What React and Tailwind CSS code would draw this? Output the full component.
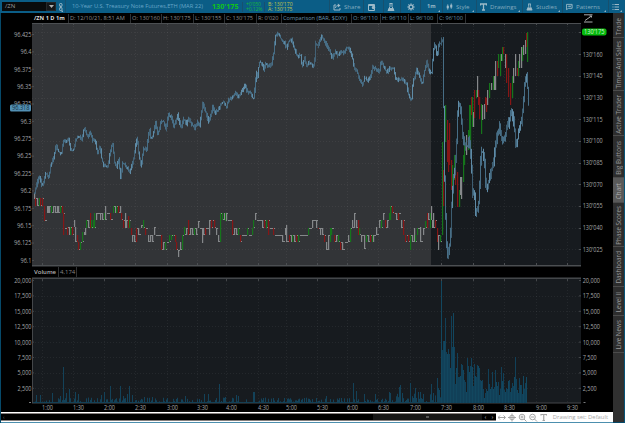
import React from 'react';

const GRID_X = [42, 73, 104, 135, 167, 197, 226, 258, 286, 317, 347, 378, 410, 441, 473, 504, 536, 567];
const GRID_Y = [32, 54, 76, 98, 119, 141, 163, 184, 206, 228, 249];
const LEFT = ['96.425', '96.4', '96.375', '96.35', '96.325', '96.3', '96.275', '96.25', '96.225', '96.2', '96.175', '96.15', '96.125', '96.1'];
const RIGHT = ["130'160", "130'145", "130'130", "130'115", "130'100", "130'085", "130'070", "130'055", "130'040", "130'025"];
const VOL = ['20,000', '17,500', '15,000', '12,500', '10,000', '7,500', '5,000', '2,500'];
const TIMES = ['1:00', '1:30', '2:00', '2:30', '3:00', '3:30', '4:00', '4:30', '5:00', '5:30', '6:00', '6:30', '7:00', '7:30', '8:00', '8:30', '9:00', '9:30'];

const DXY = `34,193 36,185 38.5,176 41.5,186 43.5,180 45.3,173 48.3,177 50,165 53.3,157 55.7,144 57.3,151 60.7,154 63.3,138 65.7,143 67.7,137 70.3,151 72.7,150 75,140 78.3,136 81,139 83.7,127 86.7,137 90,133 92,140 94.7,142 97,153 99.3,146 101.3,160 103.3,166 107.3,167 109.7,151 112,143 114,163 116,167 118,160 120,177 122.3,162 125,166 129.3,172 132,163 134.3,150 136.3,137 138,152 140.3,167 143.3,147 145.7,152 148.7,128 150,138 152.7,135 154.7,122 157.3,134 160.7,121 163.3,122 165.3,130 167.7,114 170.7,117 173.3,127 177,115 180.3,128 183.3,118 186,125 188,118 191,124 194,128 197,122 199,126 202,103 205,112 208,122 212,107 215,113 218,109 220,105 222.7,102 225.7,107 228,100 231.7,98 235.3,92 237.3,97 240,94 244.3,84 246.3,92 250,93 252.7,100 254.3,88 255.7,72 257.3,78 258.3,63 260.3,62 263.3,70 265.3,62 267.3,67 271,63 272.7,54 273.5,52 274.3,37 276.7,34 278.3,34 280.7,40 284,43 285.7,48 288.3,41 291,40 293,47 296.7,56 300,55 301.3,67 304,58 306,66 308,63 311.7,65 313.7,66 314.7,43 317.3,46 321,37 325,43 328.3,50 331.7,58 335,52 337.3,56 340.7,52 343.3,53 346.7,47 349.3,50 351.7,58 354.3,70 356.7,72 359.3,81 362,85 364.3,77 367.3,81 370,77 371.7,67 375,69 378.7,72 380.7,60 383.3,67 386,73 389.3,68 393.3,68 395,79 398.3,80 401.7,79 405.7,83 408,95 410.7,102 412.3,83 416,70 419.3,77 421.7,85 424,70 426,62 428.3,72 431,72 432.7,50 434.3,43 436.7,57 438.3,43 440,44 441.7,37 442.7,45 443.2,150 444.3,193 445.7,243 447,255 449.7,240 451,205 452.7,180 454.3,170 456,140 456.7,117 458.3,100 460.7,117 462.3,140 464.3,145 466.7,147 468.3,138 470.7,160 471.7,193 473.7,193 475,213 477,210 478.3,200 480.3,153 481.7,150 484.3,165 485.3,190 488.3,182 490.7,170 493.3,160 495,143 496.7,135 499,127 501,140 504,137 506.7,127 508.3,122 511,112 513.3,123 515,142 516.7,142 518.3,127 521,122 522.7,103 524.3,83 525.7,73 527,87 528,103 528.7,108`
  .split(' ').map((p) => p.split(',').map(Number));

// x, top, bottom, colour (w flat, r down, g up)
const CANDLES = `34,193,199,w 35,198,206,r 37,198,206,w 39,198,206,g 40,198,206,r 42,198,206,r 44,206,221,r 47,206,213,w 48,206,213,w 49,206,213,w 51,206,213,g 53,206,213,w 55,206,213,w 57,206,213,w 58,206,213,w 60,206,213,g 62,206,213,r 63,213,235,r 65,228,229,w 67,227,235,r 69,227,235,w 70,227,235,g 72,227,235,r 74,220,227,w 75,227,242,w 77,235,242,r 78,242,250,r 80,242,250,g 82,232,242,g 84,232,235,w 85,228,235,w 86,220,228,g 88,220,228,w 90,213,228,r 91,220,228,g 93,220,228,g 94,213,228,g 96,213,220,w 98,213,214,w 100,213,220,w 102,213,220,w 104,213,220,g 105,206,220,w 107,213,214,w 110,213,220,r 113,206,213,g 115,206,213,w 116,206,213,g 118,206,213,r 120,206,213,w 121,213,220,r 123,220,228,r 125,213,228,w 126,220,228,w 128,216,228,r 129,220,228,g 131,228,235,r 132,235,242,w 134,235,242,w 136,228,242,r 138,228,235,w 141,225,228,w 143,220,228,g 145,228,235,r 148,235,242,w 150,235,242,w 152,235,242,w 154,227,235,w 156,235,236,w 159,235,236,w 161,235,250,r 163,242,250,w 165,242,250,g 167,242,243,w 169,235,242,g 171,235,240,g 173,235,236,g 175,235,242,r 176,242,250,r 178,250,257,w 180,242,250,w 182,235,250,g 184,227,235,g 186,228,235,w 188,220,235,r 190,228,235,w 192,228,235,w 194,228,235,g 196,228,235,w 198,221,228,w 200,228,229,w 202,228,243,w 203,228,235,w 205,228,235,r 207,228,229,w 209,220,235,w 211,220,228,r 213,220,221,w 214,220,228,r 216,228,235,w 218,235,242,w 220,213,242,g 222,213,220,g 224,213,220,w 225,213,221,g 226,213,221,w 228,220,221,w 230,220,221,w 232,220,235,r 234,228,235,w 236,228,235,w 238,228,235,g 240,235,242,r 242,235,236,w 245,235,236,w 247,228,235,g 249,235,236,w 252,228,235,g 253,220,228,g 255,213,220,w 257,220,221,w 260,220,221,w 262,220,228,w 264,220,228,r 266,220,228,g 268,220,235,r 270,228,229,w 273,228,235,r 275,235,236,w 279,235,236,w 282,235,242,w 285,228,235,w 286,225,242,w 289,235,242,r 291,235,242,w 292,235,242,g 294,235,242,w 296,235,242,r 298,235,242,g 300,235,236,w 304,235,236,w 308,228,235,g 309,228,229,w 312,220,228,w 314,220,221,w 316,220,228,w 318,228,229,r 320,228,235,w 322,228,235,w 324,235,242,r 326,242,250,w 328,235,250,w 330,228,242,g 331,228,235,g 334,235,242,r 336,235,242,w 338,235,242,g 340,242,250,r 342,242,250,w 345,242,243,w 348,235,242,w 350,228,242,g 352,220,228,w 354,213,228,w 356,220,228,w 358,220,235,r 359,228,235,g 361,235,242,w 364,235,249,w 366,235,242,g 368,235,242,w 370,235,242,r 372,235,242,g 373,235,242,w 376,227,235,w 379,220,228,w 381,220,228,g 383,213,220,w 385,220,228,r 387,220,228,w 389,213,220,g 390,206,220,g 392,206,213,r 394,213,214,r 396,213,220,w 398,213,220,r 401,220,228,w 403,220,235,r 405,235,242,r 407,235,236,w 408,235,242,r 410,235,250,g 412,235,242,w 414,228,242,w 415,235,242,g 417,228,235,g 420,227,242,w 423,228,235,w 425,221,228,g 427,213,228,r 428,213,220,w 430,213,228,g 431,206,220,w 432,220,228,w 433,213,228,w 435,220,228,r 437,228,242,r 438,235,250,w 440,235,242,g 442,142,235,g 443,170,206,r 445,105,142,g 447,120,162,r 448,140,172,r 449,123,165,r 451,160,190,r 452,165,207,g 454,155,180,g 455,170,185,r 457,172,207,r 459,190,207,g 460,177,195,w 461,177,199,w 463,155,182,g 464,140,165,g 466,135,155,w 468,130,150,g 469,105,140,g 470,105,150,g 471,97,115,r 472,97,127,g 473,112,127,w 474,90,118,r 476,90,98,g 477,76,97,w 478,90,105,r 479,97,119,r 481,104,134,g 482,105,120,w 484,104,119,w 485,97,105,r 486,98,112,r 487,90,105,w 489,83,98,g 491,83,90,w 493,76,90,g 494,76,90,w 495,61,90,w 497,61,76,r 498,54,68,g 500,54,76,g 501,54,61,w 502,47,61,g 503,47,54,r 505,54,68,w 506,54,83,r 508,68,97,r 510,83,105,r 512,76,98,g 513,68,83,w 515,54,76,w 517,68,76,r 518,61,76,g 519,54,68,w 521,47,68,w 522,47,61,g 523,45,55,w 525,40,54,w 526,33,47,r 527,32,62,g`
  .split(' ').map((p) => p.split(','));

const INK = { w: '#85888a', r: '#851616', g: '#15751b' };

const PEAKS = { 36: 395, 40: 395, 52: 393, 60: 396, 63: 367, 66: 393, 69: 389, 75: 392, 78: 394, 101: 395, 104: 392, 110: 386, 120: 386, 123: 396, 127: 394, 129: 386, 132: 395, 144: 397, 152: 397, 167: 398, 176: 399, 185: 396, 204: 394, 208: 394, 219: 384, 225: 397, 236: 395, 238: 396, 253: 392, 254: 392, 263: 398, 273: 398, 316: 398, 326: 396, 341: 398, 353: 383, 356: 391, 364: 394, 375: 394, 389: 392, 390: 393, 399: 387, 400: 385, 402: 393, 410: 383, 415: 388, 418: 392, 420: 392, 423: 394, 431: 384, 433: 393, 437: 378, 438: 388, 439: 390 };
const SURGE = `441,281 442,350 443,341 444,341 445,318 446,352 447,354 448,349 449,354 450,368 451,316 452,347 453,313 454,347 455,384 456,368 457,353 458,377 460,376 461,364 462,365 463,370 464,380 465,382 466,392 467,358 468,366 469,372 470,366 471,358 472,367 473,386 474,364 475,376 476,377 477,365 478,366 479,368 480,380 481,381 482,380 483,389 484,398 485,393 486,389 487,391 488,369 489,384 490,389 491,387 492,372 493,389 494,387 495,370 496,382 497,386 498,382 499,395 500,389 501,367 502,381 503,373 504,390 505,392 506,388 507,389 508,381 509,380 510,392 511,388 512,383 513,386 514,377 515,357 516,379 517,390 518,393 519,378 520,385 521,385 522,394 523,376 524,389 525,383 526,377`
  .split(' ').map((p) => p.split(',').map(Number));

const rnd = (n) => {
  const v = Math.sin(n * 12.9898) * 43758.5453;
  return v - Math.floor(v);
};

const dxyBars = [];
{
  let k = 0;
  let last = DXY[0][1];
  for (let x = 34; x <= 528; x++) {
    while (k < DXY.length - 2 && DXY[k + 1][0] <= x) k++;
    const [ax, ay] = DXY[k];
    const [bx, by] = DXY[k + 1];
    const y = ay + ((by - ay) * (x - ax)) / (bx - ax);
    const amp = x > 444 ? 6 : 2.8;
    const lo = Math.min(y, last) - rnd(x) * amp;
    const hi = Math.max(y, last) + rnd(x + 900) * amp;
    dxyBars.push([x, lo, Math.max(hi - lo, 1.5), rnd(x + 77)]);
    last = y;
  }
}

const quiet = [];
for (let x = 33; x < 441; x++) {
  const r = rnd(x + 31);
  quiet.push([x, PEAKS[x] || 402.5 - (r > 0.5 ? (r - 0.5) * (x > 395 ? 18 : 10) : 0.4)]);
}

function Label({ x, y, children, anchor, w, fill = '#a2a4a6' }) {
  return (
    <text x={x} y={y + 2.3} fontSize="6.4" fill={fill} textAnchor={anchor} textLength={w} lengthAdjust="spacingAndGlyphs" fontFamily="Open Sans, sans-serif">
      {children}
    </text>
  );
}

function PriceChart() {
  return (
    <svg className="block" width="612" height="243" viewBox="1 23 612 243">
      <rect x="1" y="23" width="612" height="243" fill="#000" />
      <rect x="32" y="23" width="549" height="243" fill="#171b1f" />
      <rect x="32" y="23" width="399" height="243" fill="#323437" />
      <g stroke="#ffffff" strokeOpacity="0.06" strokeDasharray="1 2">
        {GRID_X.map((x) => <path key={x} d={`M${x + 0.5} 23V266`} />)}
        {GRID_Y.map((y) => <path key={y} d={`M32 ${y + 0.5}H581`} />)}
      </g>
      <g stroke="#4c4f52">
        {GRID_X.map((x) => <path key={x} d={`M${x + 0.5} 23v2M${x + 0.5} 263v2`} />)}
        {GRID_Y.map((y) => <path key={y} d={`M579 ${y + 0.5}h2`} />)}
        {LEFT.map((t, i) => <path key={t} d={`M32 ${34.5 + i * 17.38}h2`} />)}
        <path d="M32 23.5H581M32 265.5H581" />
      </g>
      {CANDLES.map(([x, a, b, c], i) => {
        const next = CANDLES[i + 1];
        const gap = next ? +next[0] - +x : 1;
        return (
          <g key={x + c} fill={INK[c]}>
            <rect x={x} y={a} width="1.2" height={b - a} />
            {gap > 1 && +x < 441 && <rect x={+x + 1} y={i % 2 ? a : b - a > 2 ? b - 1 : a} width={gap - 1} height="1" fill={INK.w} />}
          </g>
        );
      })}
      {dxyBars.map(([x, y, h, s]) => (
        <rect key={x} x={x} y={y} width="1" height={h} fill={s > 0.78 ? '#5f8ba6' : '#476e86'} opacity={s < 0.3 ? 0.8 : 1} />
      ))}
      {LEFT.map((t, i) => <Label key={t} x={31.5} y={34.5 + i * 17.38} anchor="end" w={t.length === 6 ? 17.5 : t.length === 5 ? 14.5 : 11}>{t}</Label>)}
      {RIGHT.map((t, i) => <Label key={t} x={582.7} y={54.5 + i * 21.65} w={20}>{t}</Label>)}
      <rect x="10" y="104.5" width="21" height="7" rx="1.5" fill="#5290b4" />
      <Label x={12} y={108} w={17.5} fill="#16303f">96.318</Label>
      <rect x="582" y="28.5" width="24.5" height="7" rx="2" fill="#06ba0d" />
      <Label x={584} y={32} w={20.5} fill="#d5f3d6">130'175</Label>
    </svg>
  );
}

function VolumeChart() {
  return (
    <svg className="block overflow-visible" width="612" height="134" viewBox="1 278 612 134">
      <rect x="1" y="278" width="612" height="134" fill="#000" />
      <rect x="32" y="278" width="549" height="125" fill="#171b1f" />
      <g stroke="#ffffff" strokeOpacity="0.06" strokeDasharray="1 2">
        {GRID_X.map((x) => <path key={x} d={`M${x + 0.5} 278V403`} />)}
        {VOL.slice(1).map((v, i) => <path key={v} d={`M32 ${Math.round(295.6 + i * 15.4) + 0.5}H581`} />)}
      </g>
      <g stroke="#44474a">
        {GRID_X.map((x) => <path key={x} d={`M${x + 0.5} 278v3`} />)}
        {VOL.map((v, i) => <path key={v} d={`M32 ${280.5 + i * 15.4}h2M579 ${280.5 + i * 15.4}h2`} />)}
        <path d="M32 278.5H581M32.5 278V403M32 403H581" />
      </g>
      {quiet.map(([x, y]) => <rect key={x} x={x} y={y} width="1" height={403 - y} fill="#134259" />)}
      {SURGE.map(([x, y], i) => (
        <rect key={x} x={x} y={y} width={(SURGE[i + 1] ? SURGE[i + 1][0] : x + 1) - x} height={403 - y} fill={i % 3 ? '#114058' : '#12475f'} />
      ))}
      {VOL.map((t, i) => <Label key={t} x={31.5} y={280.6 + i * 15.4} anchor="end" w={t.length === 6 ? 17.3 : 14}>{t}</Label>)}
      {VOL.map((t, i) => <Label key={t} x={582.7} y={280.6 + i * 15.4} w={t.length === 6 ? 17.3 : 14}>{t}</Label>)}
      <path d="M29 402.5h2M583.5 402.5h2" stroke="#77797b" />
      {TIMES.map((t, i) => <Label key={t} x={GRID_X[i] + 5.5} y={407.7} anchor="middle" w={11}>{t}</Label>)}
    </svg>
  );
}

function Tool({ width, children }) {
  return (
    <div className={`${width} relative flex h-full shrink-0 items-center gap-[3px] border-l border-[#17506e] pl-[3px] text-[6.1px] text-[#84abbf]`}>
      {children}
    </div>
  );
}

function Corner() {
  return <i className="absolute right-[2px] bottom-[1px] border-t-2 border-r-2 border-t-transparent border-r-[#8db1c2]" />;
}

function Ico({ children, w = 8, vb = '0 0 8 8' }) {
  return <svg className="shrink-0" width={w} height="8" viewBox={vb} fill="none" stroke="#9dbac8" strokeWidth="1">{children}</svg>;
}

const CELLS = [
  ['w-[62px]', 'D: 12/10/21, 8:51 AM', 'text-[#8e8e8e]'],
  ['w-[31px]', "O: 130'160", 'text-[#8e8e8e]'],
  ['w-[32px]', "H: 130'175", 'text-[#8e8e8e]'],
  ['w-[31px]', "L: 130'155", 'text-[#8e8e8e]'],
  ['w-[32px]', "C: 130'175", 'text-[#8e8e8e]'],
  ['w-[25px]', "R: 0'020", 'text-[#8e8e8e]'],
  ['w-[70px]', 'Comparison (BAR, $DXY)', 'text-[#6794ae]'],
  ['w-[29px]', "O: 96'110", 'text-[#6794ae]'],
  ['w-[28px]', "H: 96'110", 'text-[#6794ae]'],
  ['w-[29px]', "L: 96'100", 'text-[#6794ae]'],
  ['w-[28px]', "C: 96'100", 'text-[#6794ae]'],
];

const TABS = [
  ['Trade', 'h-[25px]'], ['Times And Sales', 'h-[53px]'], ['Active Trader', 'h-[45px]'], ['Big Buttons', 'h-[42px]'],
  ['Chart', 'h-[25px]'], ['Phase Scores', 'h-[44px]'], ['Dashboard', 'h-[40px]'], ['Level II', 'h-[29px]'], ['Live News', 'h-[37px]'],
];

function Toolbar() {
  return (
    <div className="flex h-[13px] w-full shrink-0 items-center overflow-hidden bg-[#0b5d86]">
      <div className="ml-[2px] flex h-[9px] w-[54px] shrink-0 items-center justify-between bg-[#090b0c] pl-[3px] text-[6px] text-[#9a9c9e]">
        /ZN
        <span className="flex h-full w-[10px] items-center justify-center border border-[#242729] bg-[#151719]">
          <svg width="5" height="3"><path d="M0 0h5L2.5 3z" fill="#b0b2b3" /></svg>
        </span>
      </div>
      <div className="relative flex h-full w-[9px] shrink-0 items-center justify-center">
        <Ico w={6} vb="0 0 6 8"><rect x="1.5" y=".5" width="2.5" height="3" rx="1" /><rect x="1.5" y="4.5" width="2.5" height="3" rx="1" /><path d="M2.7 2.5v3" /></Ico>
        <Corner />
      </div>
      <div className="flex h-full w-[144px] shrink-0 items-center border-l border-[#17506e] pl-[6px] text-[5.75px] text-[#66a5c6]">10-Year U.S. Treasury Note Futures,ETH (MAR 22)</div>
      <div className="w-[33px] shrink-0 pl-[3px] text-[7.2px] leading-none font-bold text-[#10c416]">130'175</div>
      <div className="w-[22px] shrink-0 border-l border-[#17506e] pl-[3px] text-[5px] leading-[5px] tracking-[-0.1px] text-[#14b83c]"><div>+0'050</div><div>+0.12%</div></div>
      <div className="w-[65px] shrink-0 border-l border-[#17506e] pl-[3px] text-[5.1px] leading-[5px] text-[#c6c748]"><div>B: 130'170</div><div>A: 130'175</div></div>
      <Tool width="w-[34px]"><Ico><path d="M3 2H1v5h6V5M2.5 5c0-2 1.5-2.5 3-2.5" /><path d="M4.8.5 7.5 2.5 4.8 4.5z" fill="#9dbac8" stroke="none" /></Ico>Share</Tool>
      <Tool width="w-[20px]"><Ico w={9} vb="-1 0 9 8"><path d="M.5 1.5h6v6h-6zM.5 2.5h6" /><circle cx="5.5" cy="4.5" r="1.7" fill="#9dbac8" stroke="none" /></Ico></Tool>
      <Tool width="w-[17px]"><Ico><path d="M2.5.5h3M3 .5v3L1 7.5h6L5 3.5v-3" /><path d="M2 5h4l1 2.5H1z" fill="#9dbac8" stroke="none" /></Ico></Tool>
      <Tool width="w-[20px]"><span className="w-0" /><Ico><circle cx="4" cy="4" r="2" strokeWidth="1.5" /><path d="M4 .3v1.2M4 6.5v1.2M.3 4h1.2M6.5 4h1.2M1.4 1.4l.8.8M5.8 5.8l.8.8M1.4 6.6l.8-.8M5.8 2.2l.8-.8" /></Ico></Tool>
      <Tool width="w-[22px]"><span className="pl-[3px] text-[5.5px] font-bold text-[#97b8c8]">1m</span><Corner /></Tool>
      <Tool width="w-[34px]"><Ico w={7}><path d="M2 1v6M6 0v6" /><path d="M.8 2.5h2.4v3H.8zM4.8 1.5h2.4v3H4.8z" fill="#9dbac8" stroke="none" /></Ico>Style<Corner /></Tool>
      <Tool width="w-[46px]"><Ico w={7} vb="0 0 7 8"><path d="M.5 2.5V1h6v1.5M3.5 1v6M2 7h3" strokeWidth="1.3" /></Ico>Drawings<Corner /></Tool>
      <Tool width="w-[40px]"><Ico w={7}><path d="M2.5.5h3M3 .5v3L1 7.5h6L5 3.5v-3" /><path d="M2 4.5h4l1 3H1z" fill="#9dbac8" stroke="none" /></Ico>Studies<Corner /></Tool>
      <Tool width="w-[46px]"><Ico w={7}><path d="M.5 7V1h6.5v4.5H3L.5 7M2 4l1.5-1.5L4.5 4 6 2" /></Ico>Patterns<Corner /></Tool>
      <Tool width="w-[16px]"><Ico><path d="M2.5 1.5H7M2.5 4H7M2.5 6.5H7M.5 1.5h1M.5 4h1M.5 6.5h1" /></Ico><Corner /></Tool>
    </div>
  );
}

export default function App() {
  return (
    <div className="flex h-[423px] w-[625px] flex-col overflow-hidden bg-black font-['Open_Sans',sans-serif] whitespace-nowrap">
      <Toolbar />
      <div className="flex h-[410px]">
        <div className="w-px bg-[#064969]" />
        <main className="flex w-[612px] flex-col">
          <div className="flex h-[10px] shrink-0 items-center pl-[31px] text-[5.65px] leading-[9px]">
            <div className="w-[36px] shrink-0 pl-[2px] font-bold text-[#dcdcdc]">/ZN 1 D 1m</div>
            {CELLS.map(([w, t, color]) => (
              <div key={t + w + color} className={`${w} ${color} h-[9px] shrink-0 border-l border-[#303234] pl-px`}>{t}</div>
            ))}
            <div className="h-[9px] flex-1 border-l border-[#303234]" />
            <svg className="mr-[20px]" width="9" height="9" viewBox="0 0 9 9" fill="none" stroke="#aaacad"><path d="M0 .8h8.5M0 8h8.5M1 6.5 7.5 2M5.5 2h2v1.5" /></svg>
          </div>
          <PriceChart />
          <div className="relative z-10 flex h-[12px] shrink-0 items-center pl-[31px] text-[6px] leading-[10px]">
            <div className="flex h-[12px] w-[549px] items-center border-y border-[#242628]">
              <div className="w-[26px] pl-[2px] font-semibold text-[#b4b4b4]">Volume</div>
              <div className="w-[19px] border-x border-[#303234] pl-px text-[#858585]">4,174</div>
            </div>
          </div>
          <VolumeChart />
          <div className="flex h-[10px] w-full bg-white">
            <div className="mt-px flex h-[8px] w-[495px] items-center justify-between border-y border-[#85807e] bg-black pl-[2px]">
              <span className="text-[5px] leading-none text-[#777]">‹</span>
              <div className="flex h-full w-[123px] items-center justify-between bg-[#171717]">
                <span className="ml-[53px] h-[2px] w-[3px] bg-[#555]" />
                <span className="flex h-full w-[14px] items-center justify-around bg-black text-[5px] leading-none text-[#8a8a8a]"><b>‹</b><b>›</b></span>
              </div>
            </div>
            <div className="flex flex-1 items-center justify-between pr-[5px] pl-[2px]">
              <svg width="49" height="9" viewBox="0 0 49 9" fill="none" stroke="#a5a5a5">
                <path d="M0 4.5h7M2 2.5l-2 2 2 2M5.5 2.5l2 2-2 2" />
                <circle cx="14" cy="4.5" r="2.3" /><path d="M14 .5v8M10 4.5h8" />
                <circle cx="24" cy="4" r="2.8" /><path d="M26 6l2.5 2.5M22.5 4h3M24 2.5v3" />
                <circle cx="34.5" cy="4" r="2.8" /><path d="M36.5 6l2.5 2.5M33 4h3" />
                <path d="M43 2.5V1.5h5.5v1M45.75 1.5v6M44.5 7.5h2.5" strokeWidth="1.2" />
              </svg>
              <span className="text-[5.85px] leading-[9px] text-[#a8a8a8]">Drawing set: Default</span>
            </div>
          </div>
          <div className="h-px shrink-0 bg-[#4c8fae]" />
        </main>
        <aside className="flex w-[11px] flex-col bg-[#303030]">
          {TABS.map(([t, h]) => (
            <div key={t} className={`${h} flex shrink-0 items-center justify-center border-b border-[#4b4b4b] pt-[2px] ${t === 'Chart' ? 'bg-[#595959] text-[#adadad]' : 'bg-[#2d2d2d] text-[#989898]'}`}>
              <span className="rotate-180 text-[6.3px] leading-[10px] [writing-mode:vertical-rl]">{t}</span>
            </div>
          ))}
          <div className="flex-1" />
          <div className="h-px bg-[#064969]" />
        </aside>
        <div className="w-px bg-[#075477]" />
      </div>
    </div>
  );
}
